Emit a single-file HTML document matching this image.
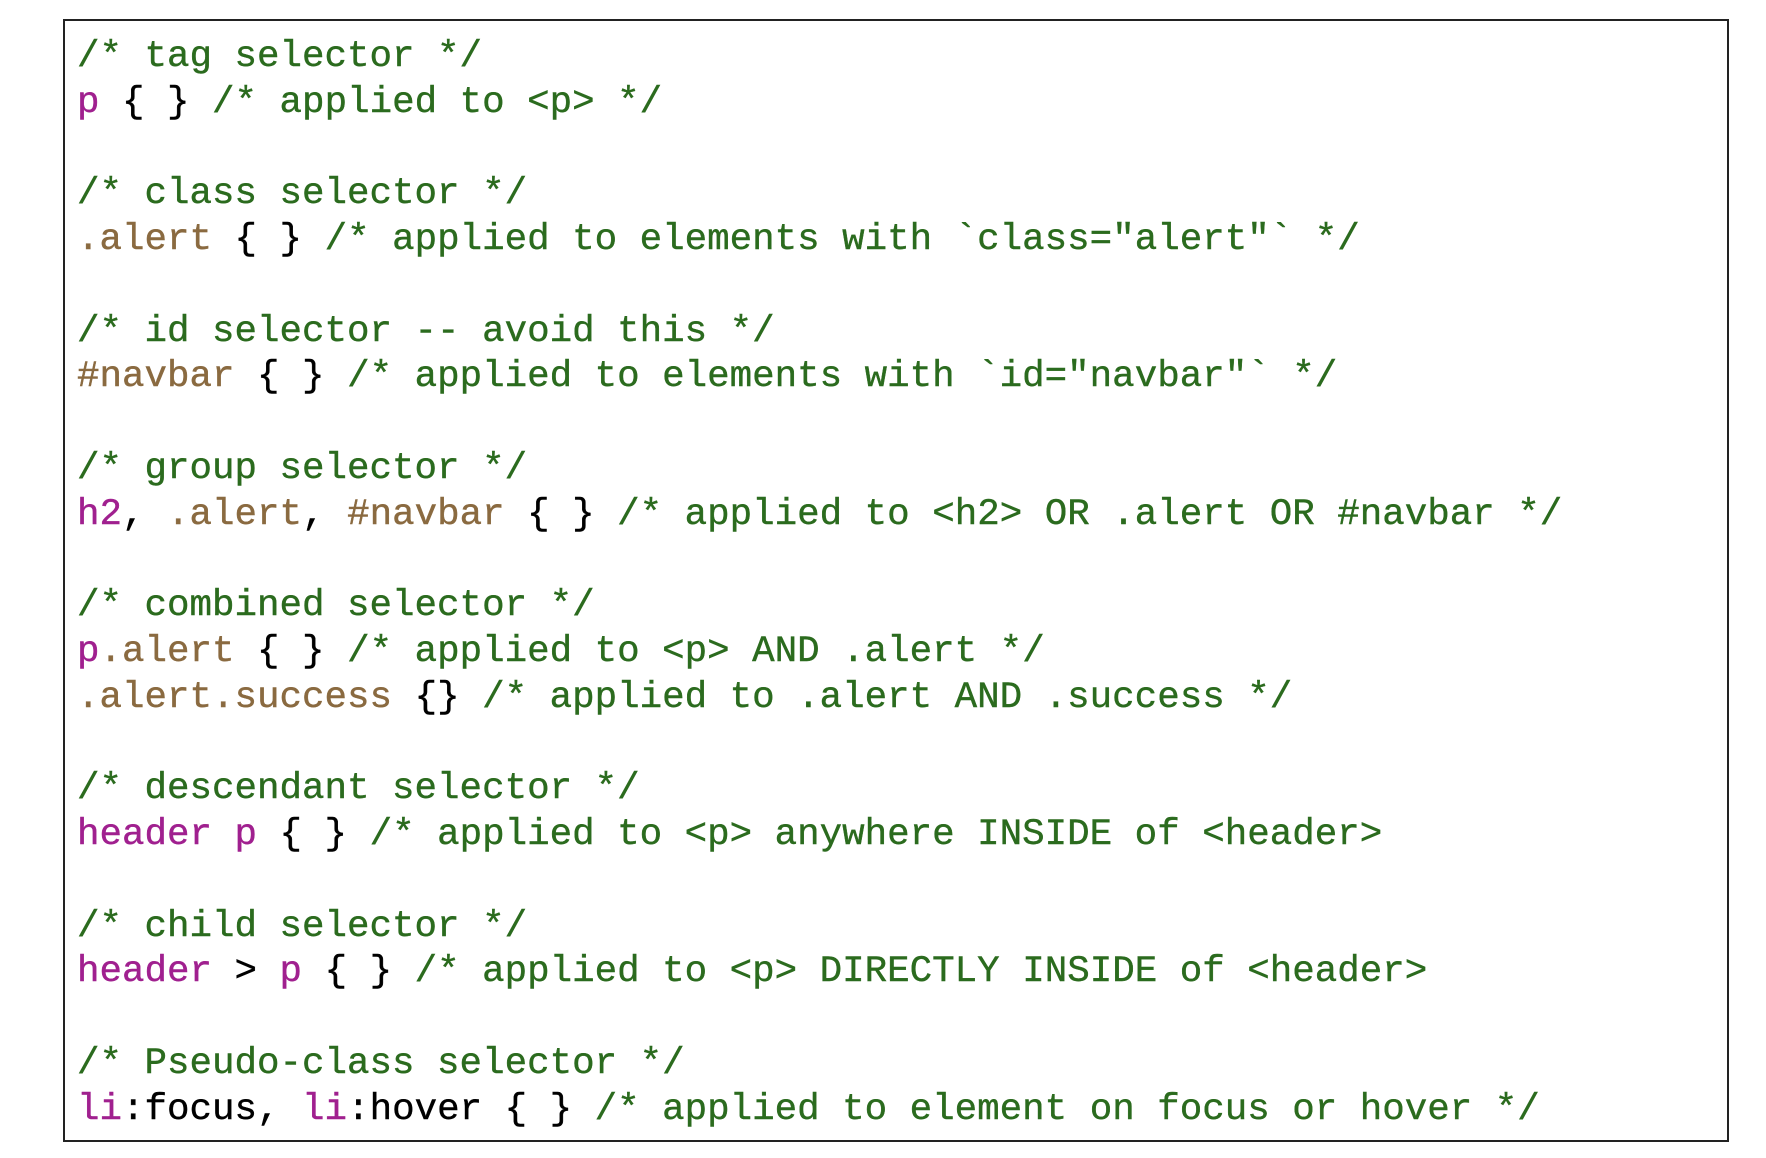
<!DOCTYPE html>
<html><head><meta charset="utf-8"><style>
html,body{margin:0;padding:0;background:#fff;width:1766px;height:1158px;overflow:hidden}
.box{position:absolute;left:63px;top:19px;width:1666px;height:1123px;box-sizing:border-box;border:2px solid #222;}
pre{position:absolute;left:77px;top:35px;margin:0;font-family:"Liberation Mono",monospace;font-size:37.5px;line-height:45.76px;color:#000;letter-spacing:0;-webkit-text-stroke:0.4px currentColor}
.c{color:#2b6b1e}.t{color:#a0208f}.s{color:#8a6a40}
</style></head><body>
<div class="box"></div>
<pre><span class="c">/* tag selector */</span>
<span class="t">p</span> { } <span class="c">/* applied to &lt;p&gt; */</span>

<span class="c">/* class selector */</span>
<span class="s">.alert</span> { } <span class="c">/* applied to elements with `class="alert"` */</span>

<span class="c">/* id selector -- avoid this */</span>
<span class="s">#navbar</span> { } <span class="c">/* applied to elements with `id="navbar"` */</span>

<span class="c">/* group selector */</span>
<span class="t">h2</span>, <span class="s">.alert</span>, <span class="s">#navbar</span> { } <span class="c">/* applied to &lt;h2&gt; OR .alert OR #navbar */</span>

<span class="c">/* combined selector */</span>
<span class="t">p</span><span class="s">.alert</span> { } <span class="c">/* applied to &lt;p&gt; AND .alert */</span>
<span class="s">.alert.success</span> {} <span class="c">/* applied to .alert AND .success */</span>

<span class="c">/* descendant selector */</span>
<span class="t">header p</span> { } <span class="c">/* applied to &lt;p&gt; anywhere INSIDE of &lt;header&gt;</span>

<span class="c">/* child selector */</span>
<span class="t">header</span> &gt; <span class="t">p</span> { } <span class="c">/* applied to &lt;p&gt; DIRECTLY INSIDE of &lt;header&gt;</span>

<span class="c">/* Pseudo-class selector */</span>
<span class="t">li</span>:focus, <span class="t">li</span>:hover { } <span class="c">/* applied to element on focus or hover */</span></pre>
</body></html>
